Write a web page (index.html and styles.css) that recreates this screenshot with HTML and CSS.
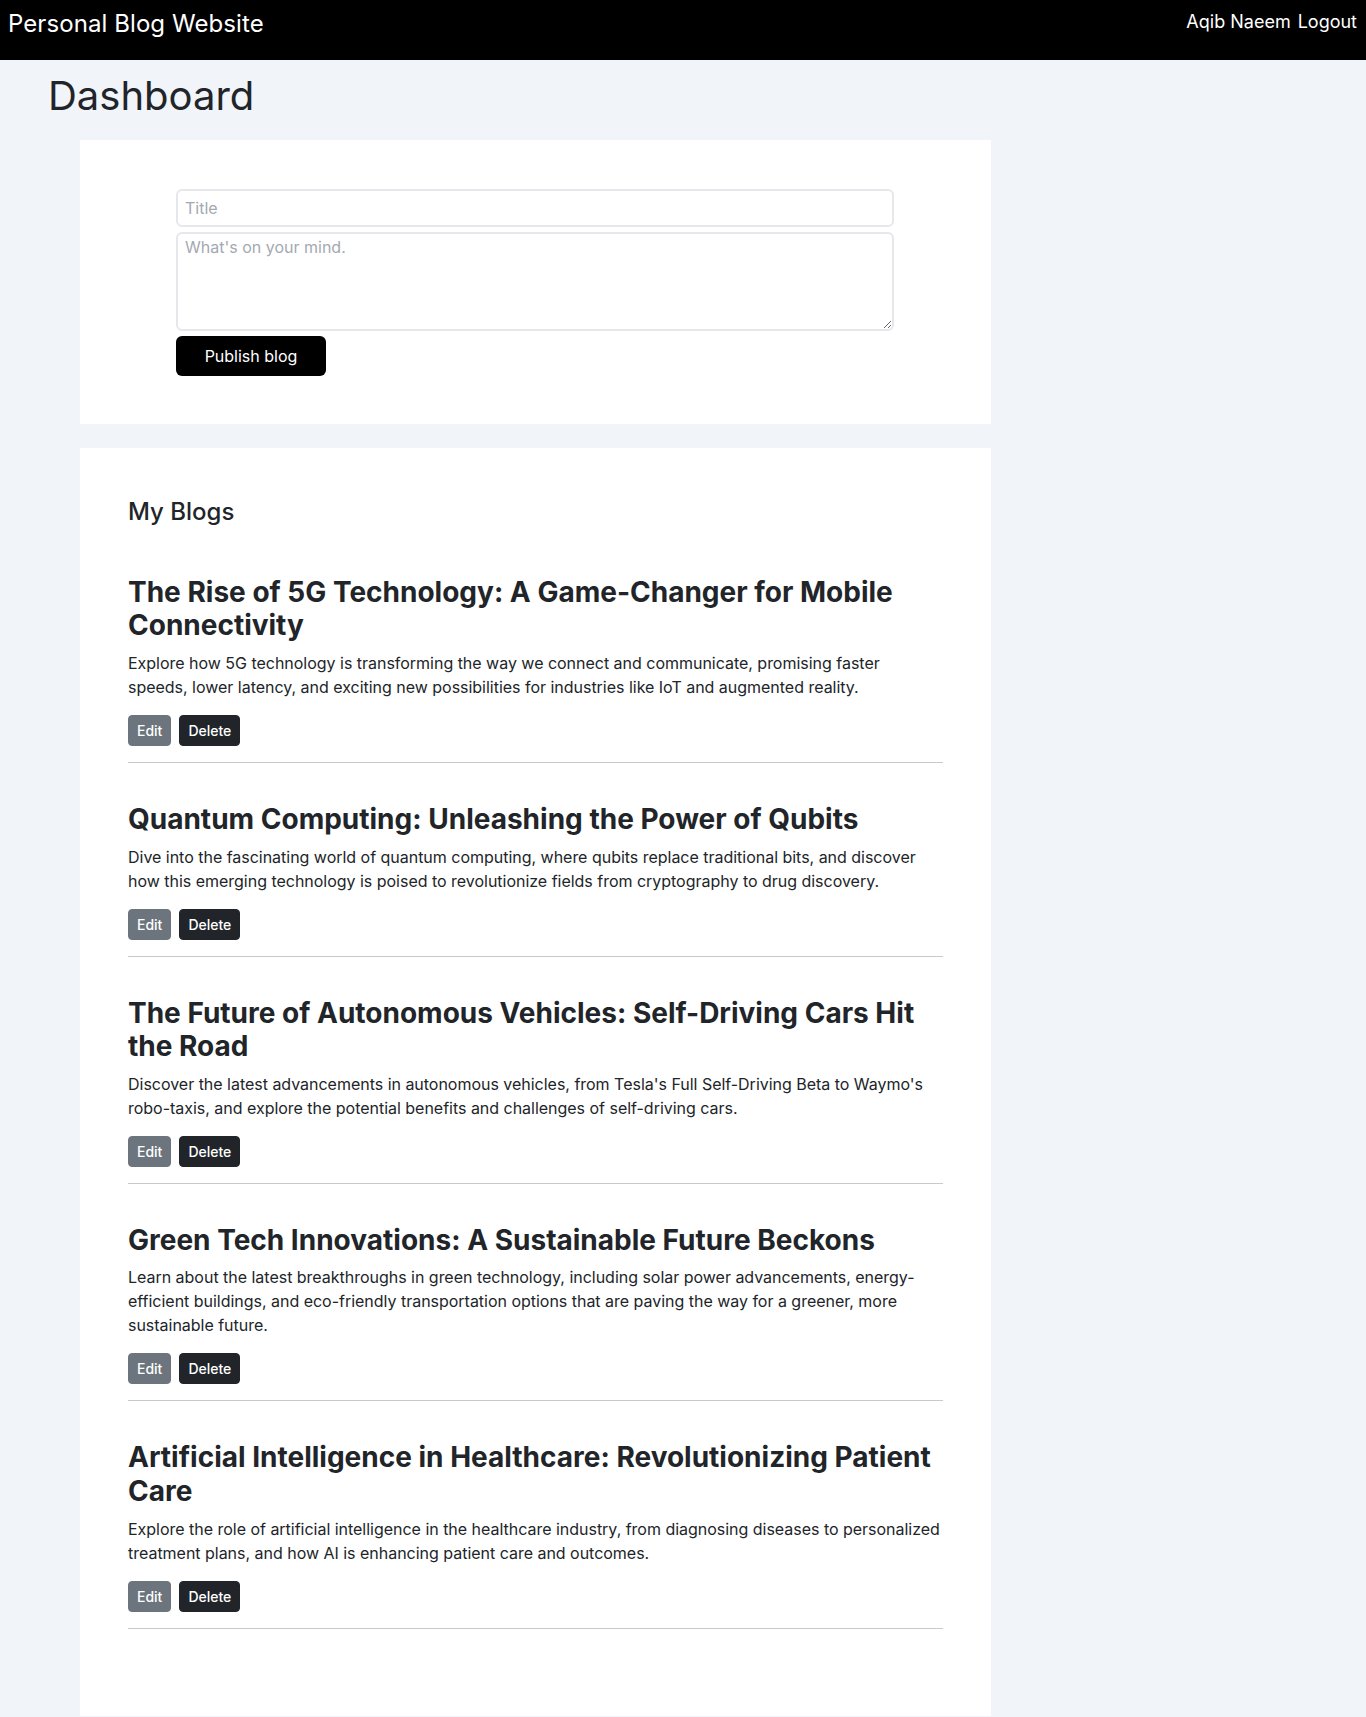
FILE: index.html
```html
<!DOCTYPE html>
<html lang="en">
<head>
<meta charset="utf-8">
<title>Personal Blog Website</title>
<link rel="stylesheet" href="styles.css">
</head>
<body>
<nav class="topbar">
  <a class="brand" href="#">Personal Blog Website</a>
  <div class="user-links">
    <a href="#">Aqib Naeem</a>
    <a href="#">Logout</a>
  </div>
</nav>
<main class="page">
  <h1 class="page-title">Dashboard</h1>
  <section class="card composer">
    <form class="composer-form">
      <input class="field" type="text" placeholder="Title">
      <textarea class="field field-area" placeholder="What's on your mind."></textarea>
      <button class="publish" type="button">Publish blog</button>
    </form>
  </section>
  <section class="card blogs">
    <h4 class="blogs-heading">My Blogs</h4>
    <article class="post">
      <h3 class="post-title">The Rise of 5G Technology: A Game-Changer for Mobile Connectivity</h3>
      <p class="post-text">Explore how 5G technology is transforming the way we connect and communicate, promising faster speeds, lower latency, and exciting new possibilities for industries like IoT and augmented reality.</p>
      <div class="post-actions"><button class="btn btn-edit">Edit</button><button class="btn btn-delete">Delete</button></div>
      <hr class="divider">
    </article>
    <article class="post">
      <h3 class="post-title">Quantum Computing: Unleashing the Power of Qubits</h3>
      <p class="post-text">Dive into the fascinating world of quantum computing, where qubits replace traditional bits, and discover how this emerging technology is poised to revolutionize fields from cryptography to drug discovery.</p>
      <div class="post-actions"><button class="btn btn-edit">Edit</button><button class="btn btn-delete">Delete</button></div>
      <hr class="divider">
    </article>
    <article class="post">
      <h3 class="post-title">The Future of Autonomous Vehicles: Self-Driving Cars Hit the Road</h3>
      <p class="post-text">Discover the latest advancements in autonomous vehicles, from Tesla's Full Self-Driving Beta to Waymo's robo-taxis, and explore the potential benefits and challenges of self-driving cars.</p>
      <div class="post-actions"><button class="btn btn-edit">Edit</button><button class="btn btn-delete">Delete</button></div>
      <hr class="divider">
    </article>
    <article class="post">
      <h3 class="post-title">Green Tech Innovations: A Sustainable Future Beckons</h3>
      <p class="post-text">Learn about the latest breakthroughs in green technology, including solar power advancements, energy-efficient buildings, and eco-friendly transportation options that are paving the way for a greener, more sustainable future.</p>
      <div class="post-actions"><button class="btn btn-edit">Edit</button><button class="btn btn-delete">Delete</button></div>
      <hr class="divider">
    </article>
    <article class="post">
      <h3 class="post-title">Artificial Intelligence in Healthcare: Revolutionizing Patient Care</h3>
      <p class="post-text">Explore the role of artificial intelligence in the healthcare industry, from diagnosing diseases to personalized treatment plans, and how AI is enhancing patient care and outcomes.</p>
      <div class="post-actions"><button class="btn btn-edit">Edit</button><button class="btn btn-delete">Delete</button></div>
      <hr class="divider">
    </article>
  </section>
</main>
</body>
</html>
```

FILE: styles.css
```css
* { box-sizing: border-box; }

html, body {
  margin: 0;
  padding: 0;
}

body {
  background: #f1f4f9;
  color: #212529;
  font-family: Inter, "Noto Sans", "Liberation Sans", sans-serif;
  font-size: 16px;
  line-height: 1.5;
}

.topbar {
  display: flex;
  justify-content: space-between;
  align-items: flex-start;
  height: 60px;
  padding: 6px 9px 0 8px;
  background: #000;
}

.topbar a {
  color: #fff;
  text-decoration: none;
}

.brand {
  font-size: 24px;
  line-height: 36px;
  letter-spacing: 0.08px;
}

.user-links {
  display: flex;
  gap: 7px;
  font-size: 18px;
  line-height: 27px;
  padding-top: 2px;
}

.page {
  padding-top: 12px;
}

.page-title {
  margin: 0 0 20px 48px;
  font-size: 40px;
  line-height: 48px;
  font-weight: 400;
}

.card {
  width: 911px;
  margin-left: 80px;
  background: #fff;
}

.composer {
  padding: 49px 97px 48px 96px;
  margin-bottom: 24px;
}

.composer-form {
  display: flex;
  flex-direction: column;
  align-items: flex-start;
  gap: 5px;
}

.field {
  width: 100%;
  display: block;
  margin: 0;
  padding: 5px 7px;
  border: 2px solid #e5e7eb;
  border-radius: 6px;
  background: #fff;
  color: #212529;
  font-family: inherit;
  font-size: 16px;
  line-height: 24px;
}

.field::placeholder {
  color: #a4a9b2;
}

.field-area {
  height: 99px;
  padding-top: 1px;
  resize: vertical;
}

.publish {
  margin: 0;
  padding: 8px 26px;
  height: 40px;
  width: 150px;
  border: 0;
  border-radius: 6px;
  background: #000;
  color: #fff;
  font-family: inherit;
  font-size: 16px;
  line-height: 24px;
  font-weight: 400;
}

.blogs {
  padding: 50px 48px 71px 48px;
}

.blogs-heading {
  margin: 0 0 25px;
  font-size: 24px;
  line-height: 28.8px;
  font-weight: 500;
}

.post {
  padding-top: 24px;
}

.post-title {
  margin: 0 0 8px;
  font-size: 28px;
  line-height: 33.6px;
  font-weight: 700;
}

.post-text {
  margin: 0 0 16px;
  font-size: 16px;
  line-height: 24px;
  letter-spacing: -0.02px;
}

.post-actions {
  display: flex;
  gap: 8px;
}

.btn {
  margin: 0;
  padding: 4px 8px;
  border: 1px solid transparent;
  border-radius: 4px;
  color: #fff;
  font-family: inherit;
  font-size: 14px;
  line-height: 21px;
  font-weight: 500;
}

.btn-edit {
  background: #6c757d;
  border-color: #6c757d;
}

.btn-delete {
  background: #212529;
  border-color: #212529;
}

.divider {
  margin: 16px 0;
  border: 0;
  border-top: 1px solid #c8c9ca;
  height: 0;
}
```
